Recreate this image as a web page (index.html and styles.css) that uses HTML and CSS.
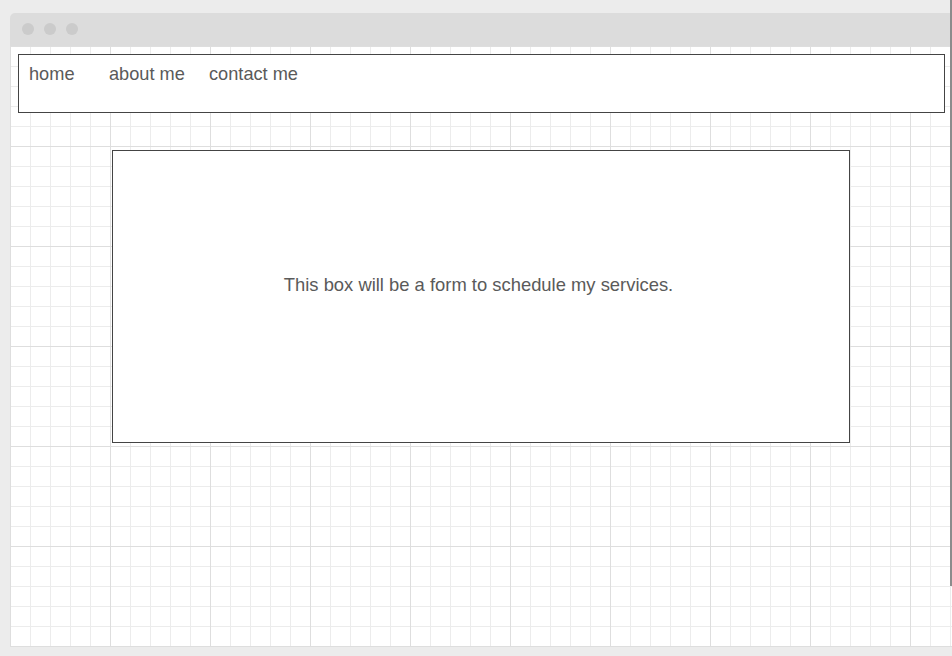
FILE: index.html
```html
<!DOCTYPE html>
<html lang="en">
<head>
<meta charset="utf-8">
<title>Wireframe</title>
<link rel="stylesheet" href="styles.css">
</head>
<body>
  <div class="window">
    <div class="titlebar">
      <span class="dot"></span>
      <span class="dot"></span>
      <span class="dot"></span>
    </div>
    <div class="canvas">
      <nav class="nav">
        <a class="nav-link">home</a>
        <a class="nav-link">about me</a>
        <a class="nav-link">contact me</a>
      </nav>
      <section class="form-box">
        <p class="form-text">This box will be a form to schedule my services.</p>
      </section>
    </div>
  </div>
  <div class="scroll-thumb"></div>
</body>
</html>
```

FILE: styles.css
```css
html, body {
  margin: 0;
  padding: 0;
}

body {
  background: #ececec;
  font-family: "Liberation Sans", Arial, sans-serif;
  color: #5a5a5a;
  overflow: hidden;
  width: 952px;
  height: 656px;
  position: relative;
}

.window {
  margin: 13px 0 0 10px;
  width: 945px;
}

.titlebar {
  height: 33px;
  background: #dcdcdc;
  border-radius: 5px 5px 0 0;
  display: flex;
  align-items: center;
  gap: 10px;
  padding: 0 0 1px 12px;
  box-sizing: border-box;
}

.dot {
  width: 12px;
  height: 12px;
  border-radius: 50%;
  background: #cbcbcb;
}

.canvas {
  height: 601px;
  background-color: #ffffff;
  background-image:
    linear-gradient(to right, #dedede 1px, transparent 1px),
    linear-gradient(to bottom, #dedede 1px, transparent 1px),
    linear-gradient(to right, #ececec 1px, transparent 1px),
    linear-gradient(to bottom, #ececec 1px, transparent 1px);
  background-size: 100px 100px, 100px 100px, 20px 20px, 20px 20px;
  padding: 8px 0 0 8px;
  box-sizing: border-box;
}

.nav {
  width: 927px;
  height: 59px;
  box-sizing: border-box;
  border: 1px solid #444444;
  background: #ffffff;
  display: grid;
  grid-template-columns: 80px 100px auto;
  align-content: start;
  padding: 9px 0 0 10px;
  font-size: 18.2px;
}

.nav-link {
  color: #5a5a5a;
}

.form-box {
  margin: 37px 0 0 94px;
  width: 738px;
  height: 293px;
  box-sizing: border-box;
  border: 1px solid #444444;
  background: #ffffff;
  padding: 123px 5px 0 0;
}

.form-text {
  margin: 0;
  text-align: center;
  font-size: 18.4px;
  color: #5a5a5a;
}

.scroll-thumb {
  position: absolute;
  top: 0;
  right: 0;
  width: 2px;
  height: 586px;
  background: #8c8c8c;
}
```
